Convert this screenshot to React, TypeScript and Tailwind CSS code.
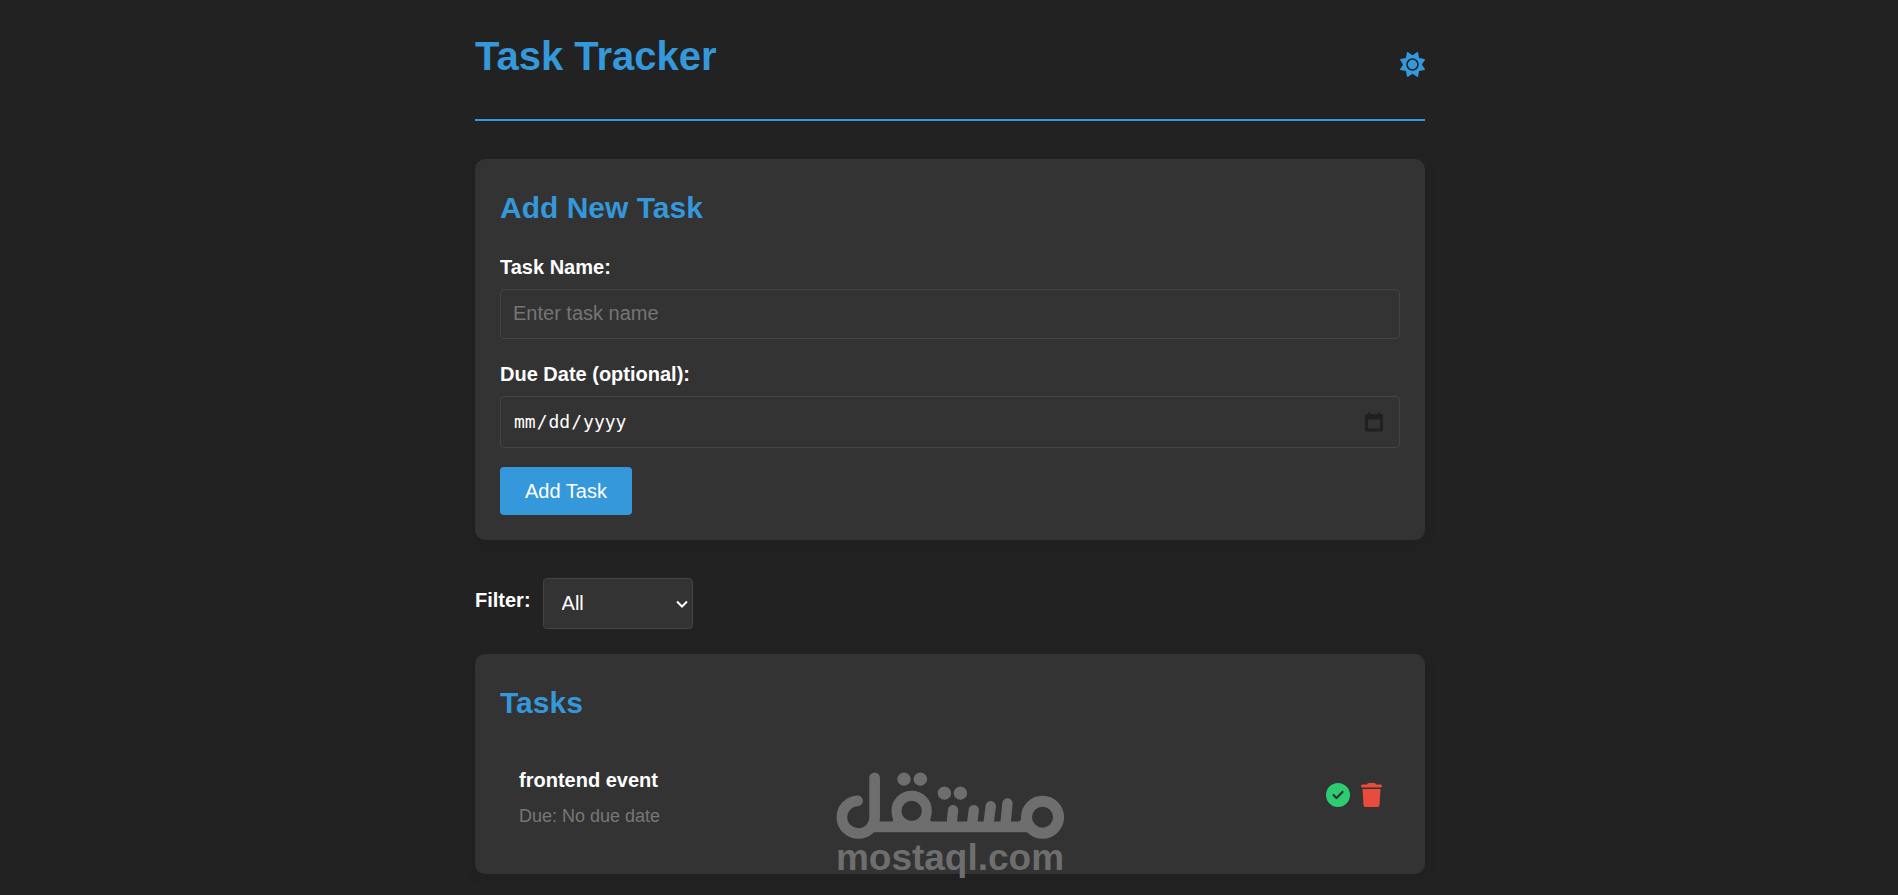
import { useState } from 'react';
import type { FormEvent, ReactNode } from 'react';
import { FaCircleCheck, FaSun, FaTrash } from 'react-icons/fa6';

type Task = {
  id: number;
  name: string;
  dueDate: string | null;
  done: boolean;
};

type Filter = 'all' | 'active' | 'completed';

const FILTERS: { value: Filter; label: string }[] = [
  { value: 'all',       label: 'All' },
  { value: 'active',    label: 'Active' },
  { value: 'completed', label: 'Completed' },
];

const INITIAL_TASKS: Task[] = [
  { id: 1, name: 'frontend event', dueDate: null, done: false },
];

const fieldClass =
  'block w-full rounded border border-[#444] bg-[#333] px-3 text-white placeholder:text-[#757575] focus:outline-none focus:border-[#3498db]';

function Card({ title, children }: { title: string; children: ReactNode }) {
  return (
    <section className="relative rounded-[10px] bg-[#333] p-[25px] shadow-[0_3px_13px_rgba(0,0,0,0.1)]">
      <h2 className="mb-[19px] text-[30px] leading-[48px] font-bold text-[#3498db]">{title}</h2>
      {children}
    </section>
  );
}

function Watermark() {
  return (
    <div className="pointer-events-none absolute bottom-[-2px] left-1/2 flex -translate-x-1/2 flex-col items-center text-[#6e6e6e]">
      <svg width="228" height="67" viewBox="45 36 683 200" fill="none" stroke="currentColor" strokeLinecap="round" aria-hidden="true">
        <path d="M110 122A49 49 0 1 0 161 171V53" strokeWidth="32" />
        <path d="M155 200H625" strokeWidth="32" strokeLinecap="butt" />
        <circle cx="272" cy="152" r="45.5" strokeWidth="30" />
        <circle cx="664" cy="171" r="48" strokeWidth="33" />
        <path d="M396 150L391 200M458 150L452 200M509 138L501 200M559 130L552 200" strokeWidth="31" />
        <g fill="currentColor" stroke="none">
          <circle cx="249" cy="57" r="20" />
          <circle cx="298" cy="57" r="20" />
          <circle cx="370" cy="99" r="20" />
          <circle cx="418" cy="99" r="20" />
          <path d="M214 170Q222 184 208 186H235Z" />
          <path d="M330 170Q322 184 336 186H309Z" />
          <path d="M601 165Q602 184 588 186H620Z" />
        </g>
      </svg>
      <span className="text-[37px] leading-[37px] font-bold">mostaql.com</span>
    </div>
  );
}

export default function App() {
  const [tasks, setTasks]     = useState<Task[]>(INITIAL_TASKS);
  const [filter, setFilter]   = useState<Filter>('all');
  const [name, setName]       = useState('');
  const [dueDate, setDueDate] = useState('');
  const [light, setLight]     = useState(false);

  function handleSubmit(e: FormEvent) {
    e.preventDefault();
    if (!name.trim()) return;
    setTasks((p) => [...p, { id: Date.now(), name: name.trim(), dueDate: dueDate || null, done: false }]);
    setName('');
    setDueDate('');
  }

  function toggleTask(id: number) {
    setTasks((p) => p.map((t) => (t.id === id ? { ...t, done: !t.done } : t)));
  }

  function removeTask(id: number) {
    setTasks((p) => p.filter((t) => t.id !== id));
  }

  const visible = tasks.filter((t) => filter === 'all' || (filter === 'completed') === t.done);

  return (
    <div
      className={`min-h-screen pt-[25px] pr-6 pb-5 pl-[26px] font-['Liberation_Sans',Arial,sans-serif] text-[20px] leading-8 text-white ${light ? 'bg-[#555]' : 'bg-[#222]'}`}
    >
      <main className="mx-auto max-w-[950px]">
        <header className="mb-[38px] flex items-center justify-between border-b-2 border-[#3498db] pb-[15px]">
          <h1 className="mb-[17px] text-[40px] leading-[62px] font-bold text-[#3498db]">Task Tracker</h1>
          <button type="button" aria-label="Toggle theme" onClick={() => setLight((p) => !p)} className="text-[#3498db]">
            <FaSun size={25} />
          </button>
        </header>

        <Card title="Add New Task">
          <form onSubmit={handleSubmit}>
            <div className="mb-[19px]">
              <label htmlFor="task-name" className="mb-1.5 block font-bold">Task Name:</label>
              <input
                id="task-name"
                type="text"
                placeholder="Enter task name"
                value={name}
                onChange={(e) => setName(e.target.value)}
                className={`${fieldClass} h-[50px] pb-0.5`}
              />
            </div>
            <div className="mb-[19px]">
              <label htmlFor="due-date" className="mb-1.5 block font-bold">Due Date (optional):</label>
              {/* The native picker stays clickable under the drawn icon */}
              <div className="relative">
                <input
                  id="due-date"
                  type="date"
                  value={dueDate}
                  onChange={(e) => setDueDate(e.target.value)}
                  className={`${fieldClass} h-[52px] font-['DejaVu_Sans_Mono',monospace] text-[18px] [&::-webkit-calendar-picker-indicator]:opacity-0`}
                />
                <svg
                  width="18"
                  height="20"
                  viewBox="0 0 18 20"
                  fill="currentColor"
                  aria-hidden="true"
                  className="pointer-events-none absolute top-1/2 right-[17px] -translate-y-1/2 text-[#202020]"
                >
                  <path
                    fillRule="evenodd"
                    d="M3 0.500H5.500V2H12.500V0.500H15V2H16A2 2 0 0 1 18 4V17.500A2 2 0 0 1 16 19.500H2A2 2 0 0 1 0 17.500V4A2 2 0 0 1 2 2H3ZM3 7.500V16.500H15V7.500Z"
                  />
                </svg>
              </div>
            </div>
            <button type="submit" className="block h-12 rounded bg-[#3498db] px-[25px] text-white hover:bg-[#2980b9]">
              Add Task
            </button>
          </form>
        </Card>

        <div className="mt-[38px] mb-[25px] flex items-center gap-3">
          <label htmlFor="filter" className="mb-2 font-bold">Filter:</label>
          <div className="relative">
            <select
              id="filter"
              value={filter}
              onChange={(e) => setFilter(e.target.value as Filter)}
              className="block h-[51px] w-[150px] appearance-none rounded border border-[#444] bg-[#333] pb-0.5 pl-[18px] text-white"
            >
              {FILTERS.map((f) => (
                <option key={f.value} value={f.value}>{f.label}</option>
              ))}
            </select>
            <svg
              width="12"
              height="8"
              viewBox="0 0 12 8"
              fill="none"
              stroke="currentColor"
              strokeWidth="2"
              aria-hidden="true"
              className="pointer-events-none absolute top-1/2 right-[5px] -translate-y-1/2"
            >
              <path d="M1 1.5L6 6.5L11 1.5" />
            </svg>
          </div>
        </div>

        <Card title="Tasks">
          <ul>
            {visible.map((task) => (
              <li key={task.id} className="flex items-center justify-between py-[18px] pr-[18px] pl-[19px]">
                <div>
                  <p className={task.done ? 'mb-1.5 font-bold line-through' : 'mb-1.5 font-bold'}>{task.name}</p>
                  <p className="text-[18px] leading-[29px] text-[#777]">Due: {task.dueDate ?? 'No due date'}</p>
                </div>
                <div className="mb-1.5 flex gap-[11px]">
                  <button type="button" aria-label="Complete task" onClick={() => toggleTask(task.id)} className="text-[#2ecc71]">
                    <FaCircleCheck size={24} />
                  </button>
                  <button type="button" aria-label="Delete task" onClick={() => removeTask(task.id)} className="text-[#e74c3c]">
                    <FaTrash className="h-6 w-[21px]" />
                  </button>
                </div>
              </li>
            ))}
          </ul>
          <Watermark />
        </Card>
      </main>
    </div>
  );
}
